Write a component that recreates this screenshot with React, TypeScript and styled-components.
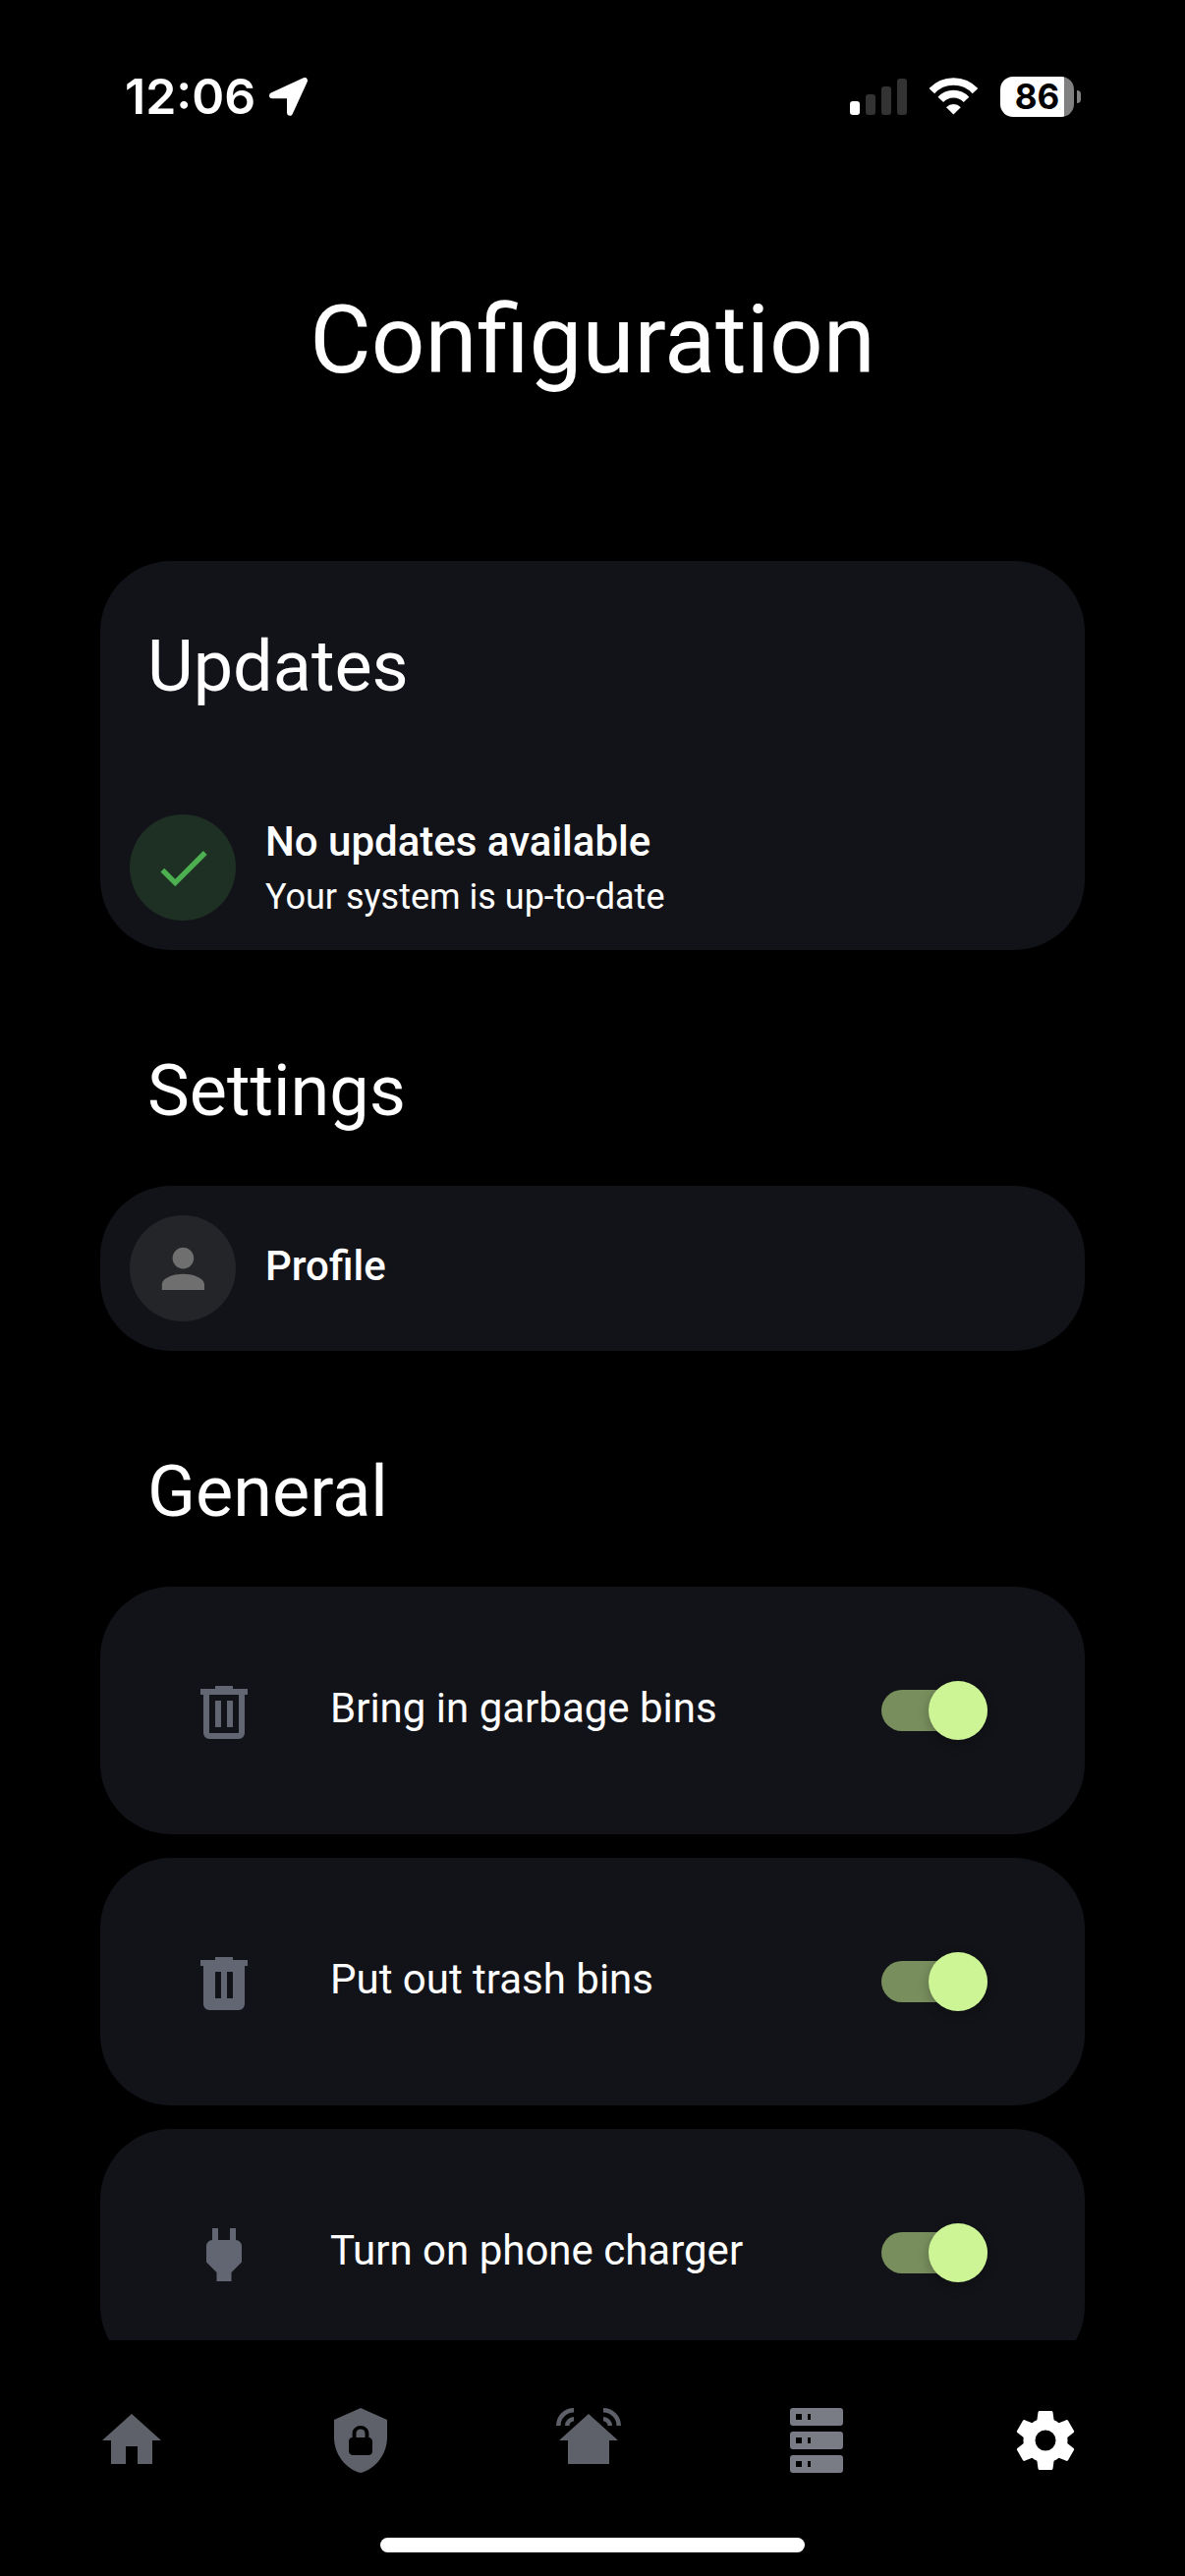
import React, { useState } from "react";
import styled, { createGlobalStyle } from "styled-components";

const colors = {
  background: "#000000",
  card: "#121318",
  text: "#ffffff",
  rowIcon: "#626572",
  navIcon: "#5e6169",
  navIconLight: "#797c85",
  accent: "#cdf596",
  track: "#788e5d",
  green: "#4caf50",
  greenSoft: "#1e3023",
  grey: "#6f6f6f",
  greySoft: "#242529",
};

const paths = {
  check: "M21,7L9,19L3.5,13.5L4.91,12.09L9,16.17L19.59,5.59L21,7Z",
  account:
    "M12,4A4,4 0 0,1 16,8A4,4 0 0,1 12,12A4,4 0 0,1 8,8A4,4 0 0,1 12,4M12,14C16.42,14 20,15.79 20,18V20H4V18C4,15.79 7.58,14 12,14Z",
  trashOutline:
    "M9,3V4H4V6H5V19A2,2 0 0,0 7,21H17A2,2 0 0,0 19,19V6H20V4H15V3H9M7,6H17V19H7V6M9,8V17H11V8H9M13,8V17H15V8H13Z",
  trash:
    "M9,3V4H4V6H5V19A2,2 0 0,0 7,21H17A2,2 0 0,0 19,19V6H20V4H15V3H9M9,8H11V17H9V8M13,8H15V17H13V8Z",
  plug: "M16,7V3H14V7H10V3H8V7H8C7,7 6,8 6,9V14.5L9.5,18V21H14.5V18L18,14.5V9C18,8 17,7 16,7Z",
  home: "M10,20V14H14V20H19V12H22L12,3L2,12H5V20H10Z",
  shieldLock:
    "M12,1L3,5V11C3,16.55 6.84,21.74 12,23C17.16,21.74 21,16.55 21,11V5L12,1M12,7C13.4,7 14.8,8.1 14.8,9.5V11C15.4,11 16,11.6 16,12.3V15.8C16,16.4 15.4,17 14.7,17H9.2C8.6,17 8,16.4 8,15.7V12.2C8,11.6 8.6,11 9.2,11V9.5C9.2,8.1 10.6,7 12,7M12,8.2C11.2,8.2 10.5,8.7 10.5,9.5V11H13.5V9.5C13.5,8.7 12.8,8.2 12,8.2Z",
  homeSignal:
    "M12,3L2,12H5V20H19V12H22L12,3ZM7,1A6,6 0 0,0 1,7H2.5A4.5,4.5 0 0,1 7,2.5V1M7,4A3,3 0 0,0 4,7H5.5A1.5,1.5 0 0,1 7,5.5V4M17,1A6,6 0 0,1 23,7H21.5A4.5,4.5 0 0,0 17,2.5V1M17,4A3,3 0 0,1 20,7H18.5A1.5,1.5 0 0,0 17,5.5V4Z",
  server:
    "M4,1H20A1,1 0 0,1 21,2V6A1,1 0 0,1 20,7H4A1,1 0 0,1 3,6V2A1,1 0 0,1 4,1M4,9H20A1,1 0 0,1 21,10V14A1,1 0 0,1 20,15H4A1,1 0 0,1 3,14V10A1,1 0 0,1 4,9M4,17H20A1,1 0 0,1 21,18V22A1,1 0 0,1 20,23H4A1,1 0 0,1 3,22V18A1,1 0 0,1 4,17M9,5H10V3H9V5M9,13H10V11H9V13M9,21H10V19H9V21M5,3V5H7V3H5M5,11V13H7V11H5M5,19V21H7V19H5Z",
  cog: "M12,15.5A3.5,3.5 0 0,1 8.5,12A3.5,3.5 0 0,1 12,8.5A3.5,3.5 0 0,1 15.5,12A3.5,3.5 0 0,1 12,15.5M19.43,12.97C19.47,12.65 19.5,12.33 19.5,12C19.5,11.67 19.47,11.34 19.43,11L21.54,9.37C21.73,9.22 21.78,8.95 21.66,8.73L19.66,5.27C19.54,5.05 19.27,4.96 19.05,5.05L16.56,6.05C16.04,5.66 15.5,5.32 14.87,5.07L14.5,2.42C14.46,2.18 14.25,2 14,2H10C9.75,2 9.54,2.18 9.5,2.42L9.13,5.07C8.5,5.32 7.96,5.66 7.44,6.05L4.95,5.05C4.73,4.96 4.46,5.05 4.34,5.27L2.34,8.73C2.21,8.95 2.27,9.22 2.46,9.37L4.57,11C4.53,11.34 4.5,11.67 4.5,12C4.5,12.33 4.53,12.65 4.57,12.97L2.46,14.63C2.27,14.78 2.21,15.05 2.34,15.27L4.34,18.73C4.46,18.95 4.73,19.03 4.95,18.95L7.44,17.94C7.96,18.34 8.5,18.68 9.13,18.93L9.5,21.58C9.54,21.82 9.75,22 10,22H14C14.25,22 14.46,21.82 14.5,21.58L14.87,18.93C15.5,18.67 16.04,18.34 16.56,17.94L19.05,18.95C19.27,19.03 19.54,18.95 19.66,18.73L21.66,15.27C21.78,15.05 21.73,14.78 21.54,14.63L19.43,12.97Z",
};

type IconName = keyof typeof paths;

const GlobalStyle = createGlobalStyle`
  *, *::before, *::after { box-sizing: border-box; }
  body {
    margin: 0;
    background: ${colors.background};
    color: ${colors.text};
    font-family: Roboto, "Liberation Sans", sans-serif;
  }
`;

const Screen = styled.div`
  display: flex;
  flex-direction: column;
  height: 100vh;
`;

const StatusBar = styled.header`
  display: flex;
  align-items: center;
  justify-content: space-between;
  padding: 62px 106px 0 127px;
  font-family: Inter, "Liberation Sans", sans-serif;
`;

const StatusGroup = styled.div<{ $gap: number }>`
  display: flex;
  align-items: center;
  gap: ${(p) => p.$gap}px;
  height: 72px;
`;

const Time = styled.time`
  font-size: 50px;
  line-height: 72px;
  font-weight: 600;
`;

const SignalBars = styled.div`
  display: flex;
  align-items: flex-end;
  gap: 6px;
`;

const SignalBar = styled.span<{ $height: number; $on?: boolean }>`
  width: 10px;
  height: ${(p) => p.$height}px;
  border-radius: 3px;
  background: ${(p) => (p.$on ? "#ffffff" : "#333333")};
`;

const Battery = styled.div`
  display: flex;
  align-items: center;
  gap: 3px;
`;

const BatteryBody = styled.span`
  display: flex;
  align-items: center;
  justify-content: center;
  width: 75px;
  height: 41px;
  border-radius: 13px;
  background: linear-gradient(90deg, #ffffff 65px, #808080 65px);
  color: #000000;
  font-size: 35px;
  line-height: 40px;
  font-weight: 700;
`;

const BatteryTip = styled.span`
  width: 4px;
  height: 13px;
  border-radius: 0 4px 4px 0;
  background: #808080;
`;

const Content = styled.main`
  flex: 1;
  min-height: 0;
  overflow-y: auto;
  scrollbar-width: none;
  padding: 0 102px;
`;

const PageTitle = styled.h1`
  margin: 0;
  padding: 152px 0 165px;
  font-size: 96px;
  line-height: 120px;
  font-weight: 400;
  text-align: center;
`;

const SectionTitle = styled.h2<{ $inCard?: boolean }>`
  margin: 0;
  padding: ${(p) => (p.$inCard ? "60px 48px 72px" : "96px 48px 48px")};
  font-size: 72px;
  line-height: 96px;
  font-weight: 400;
`;

const Card = styled.section`
  border-radius: 72px;
  background: ${colors.card};
`;

const Tile = styled.div`
  display: flex;
  align-items: center;
  gap: 30px;
  width: 100%;
  min-height: 168px;
  padding: 28px 30px;
`;

const TileButton = styled(Tile).attrs({ as: "button" })`
  border: 0;
  border-radius: 72px;
  background: none;
  color: inherit;
  font-family: inherit;
  text-align: left;
  cursor: pointer;
`;

const Badge = styled.span<{ $tone: string; $fill: string }>`
  display: flex;
  align-items: center;
  justify-content: center;
  width: 108px;
  height: 108px;
  border-radius: 50%;
  background: ${(p) => p.$fill};
  color: ${(p) => p.$tone};

  svg {
    width: 60%;
    height: 60%;
  }
`;

const TileText = styled.span`
  display: flex;
  flex-direction: column;
`;

const TileTitle = styled.span`
  font-size: 42px;
  line-height: 60px;
  font-weight: 500;

  &:only-child {
    padding-bottom: 4px;
  }
`;

const TileDetail = styled.span`
  font-size: 36px;
  line-height: 52px;
`;

const SwitchList = styled.div`
  display: flex;
  flex-direction: column;
  gap: 24px;
`;

const SwitchRow = styled(Card).attrs({ as: "div" })`
  display: flex;
  align-items: center;
  gap: 72px;
  height: 252px;
  padding: 0 99px 0 90px;
`;

const RowIcon = styled.span`
  display: flex;
  padding-top: 4px;
  color: ${colors.rowIcon};
`;

const RowLabel = styled.label`
  flex: 1;
  padding-bottom: 4px;
  font-size: 42px;
  line-height: 60px;
`;

const Switch = styled.input`
  appearance: none;
  display: grid;
  align-items: center;
  width: 108px;
  height: 60px;
  margin: 0;
  cursor: pointer;

  &::before,
  &::after {
    content: "";
    grid-area: 1 / 1;
  }

  &::before {
    height: 42px;
    border-radius: 21px;
    background: #4a4c55;
  }

  &::after {
    width: 60px;
    height: 60px;
    border-radius: 50%;
    background: #9a9ca5;
    box-shadow: 0 4px 12px rgba(0, 0, 0, 0.24);
  }

  &:checked::before {
    background: ${colors.track};
  }

  &:checked::after {
    justify-self: end;
    background: ${colors.accent};
  }
`;

const NavBar = styled.nav`
  display: flex;
  flex-direction: column;
  align-items: center;
  justify-content: space-between;
  height: 240px;
  padding: 66px 0 24px;
`;

const NavItems = styled.div`
  display: flex;
  width: 100%;
  padding: 0 26px 0 18px;
`;

const NavButton = styled.button<{ $color: string }>`
  flex: 1;
  display: flex;
  justify-content: center;
  padding: 0;
  border: 0;
  background: none;
  color: ${(p) => p.$color};
  cursor: pointer;
`;

const HomeIndicator = styled.div`
  width: 432px;
  height: 15px;
  border-radius: 8px;
  background: #ffffff;
`;

function Icon({ name }: { name: IconName }) {
  return (
    <svg width="72" height="72" viewBox="0 0 24 24" fill="currentColor" aria-hidden="true">
      <path fillRule="evenodd" d={paths[name]} />
    </svg>
  );
}

function LocationArrow() {
  return (
    <svg width="39" height="39" viewBox="0 0 39 39" aria-hidden="true">
      <path
        d="M3 18.3L36 3L21 35.7V18.3Z"
        fill="#fff"
        stroke="#fff"
        strokeWidth="6"
        strokeLinejoin="round"
      />
    </svg>
  );
}

function Wifi() {
  return (
    <svg width="51" height="38" viewBox="0 0 51 38" aria-hidden="true">
      <g fill="none" stroke="#fff" strokeWidth="7.6">
        <path d="M3.3 13.6A30.1 30.1 0 0 1 47.5 13.6" />
        <path d="M12.3 22.4A17.8 17.8 0 0 1 38.5 22.4" />
      </g>
      <path d="M18 30.2A10.4 10.4 0 0 1 32.8 30.2L25.4 37.4Z" fill="#fff" />
    </svg>
  );
}

const switches: { id: string; icon: IconName; label: string }[] = [
  { id: "bring-in-bins", icon: "trashOutline", label: "Bring in garbage bins" },
  { id: "put-out-bins", icon: "trash", label: "Put out trash bins" },
  { id: "phone-charger", icon: "plug", label: "Turn on phone charger" },
];

const tabs: { icon: IconName; label: string; color: string }[] = [
  { icon: "home", label: "Home", color: colors.navIcon },
  { icon: "shieldLock", label: "Security", color: colors.navIcon },
  { icon: "homeSignal", label: "Devices", color: colors.navIcon },
  { icon: "server", label: "Server", color: colors.navIconLight },
  { icon: "cog", label: "Configuration", color: colors.text },
];

export default function App() {
  const [on, setOn] = useState<Record<string, boolean>>({
    "bring-in-bins": true,
    "put-out-bins": true,
    "phone-charger": true,
  });

  return (
    <Screen>
      <GlobalStyle />
      <StatusBar>
        <StatusGroup $gap={14}>
          <Time>12:06</Time>
          <LocationArrow />
        </StatusGroup>
        <StatusGroup $gap={22}>
          <SignalBars>
            <SignalBar $height={14} $on />
            <SignalBar $height={21} />
            <SignalBar $height={29} />
            <SignalBar $height={37} />
          </SignalBars>
          <Wifi />
          <Battery>
            <BatteryBody>86</BatteryBody>
            <BatteryTip />
          </Battery>
        </StatusGroup>
      </StatusBar>

      <Content>
        <PageTitle>Configuration</PageTitle>

        <Card>
          <SectionTitle $inCard>Updates</SectionTitle>
          <Tile>
            <Badge $tone={colors.green} $fill={colors.greenSoft}>
              <Icon name="check" />
            </Badge>
            <TileText>
              <TileTitle>No updates available</TileTitle>
              <TileDetail>Your system is up-to-date</TileDetail>
            </TileText>
          </Tile>
        </Card>

        <SectionTitle>Settings</SectionTitle>
        <Card>
          <TileButton>
            <Badge $tone={colors.grey} $fill={colors.greySoft}>
              <Icon name="account" />
            </Badge>
            <TileText>
              <TileTitle>Profile</TileTitle>
            </TileText>
          </TileButton>
        </Card>

        <SectionTitle>General</SectionTitle>
        <SwitchList>
          {switches.map((s) => (
            <SwitchRow key={s.id}>
              <RowIcon>
                <Icon name={s.icon} />
              </RowIcon>
              <RowLabel htmlFor={s.id}>{s.label}</RowLabel>
              <Switch
                id={s.id}
                type="checkbox"
                checked={on[s.id]}
                onChange={(e) => setOn({ ...on, [s.id]: e.target.checked })}
              />
            </SwitchRow>
          ))}
        </SwitchList>
      </Content>

      <NavBar>
        <NavItems>
          {tabs.map((t) => (
            <NavButton key={t.icon} type="button" aria-label={t.label} $color={t.color}>
              <Icon name={t.icon} />
            </NavButton>
          ))}
        </NavItems>
        <HomeIndicator />
      </NavBar>
    </Screen>
  );
}
